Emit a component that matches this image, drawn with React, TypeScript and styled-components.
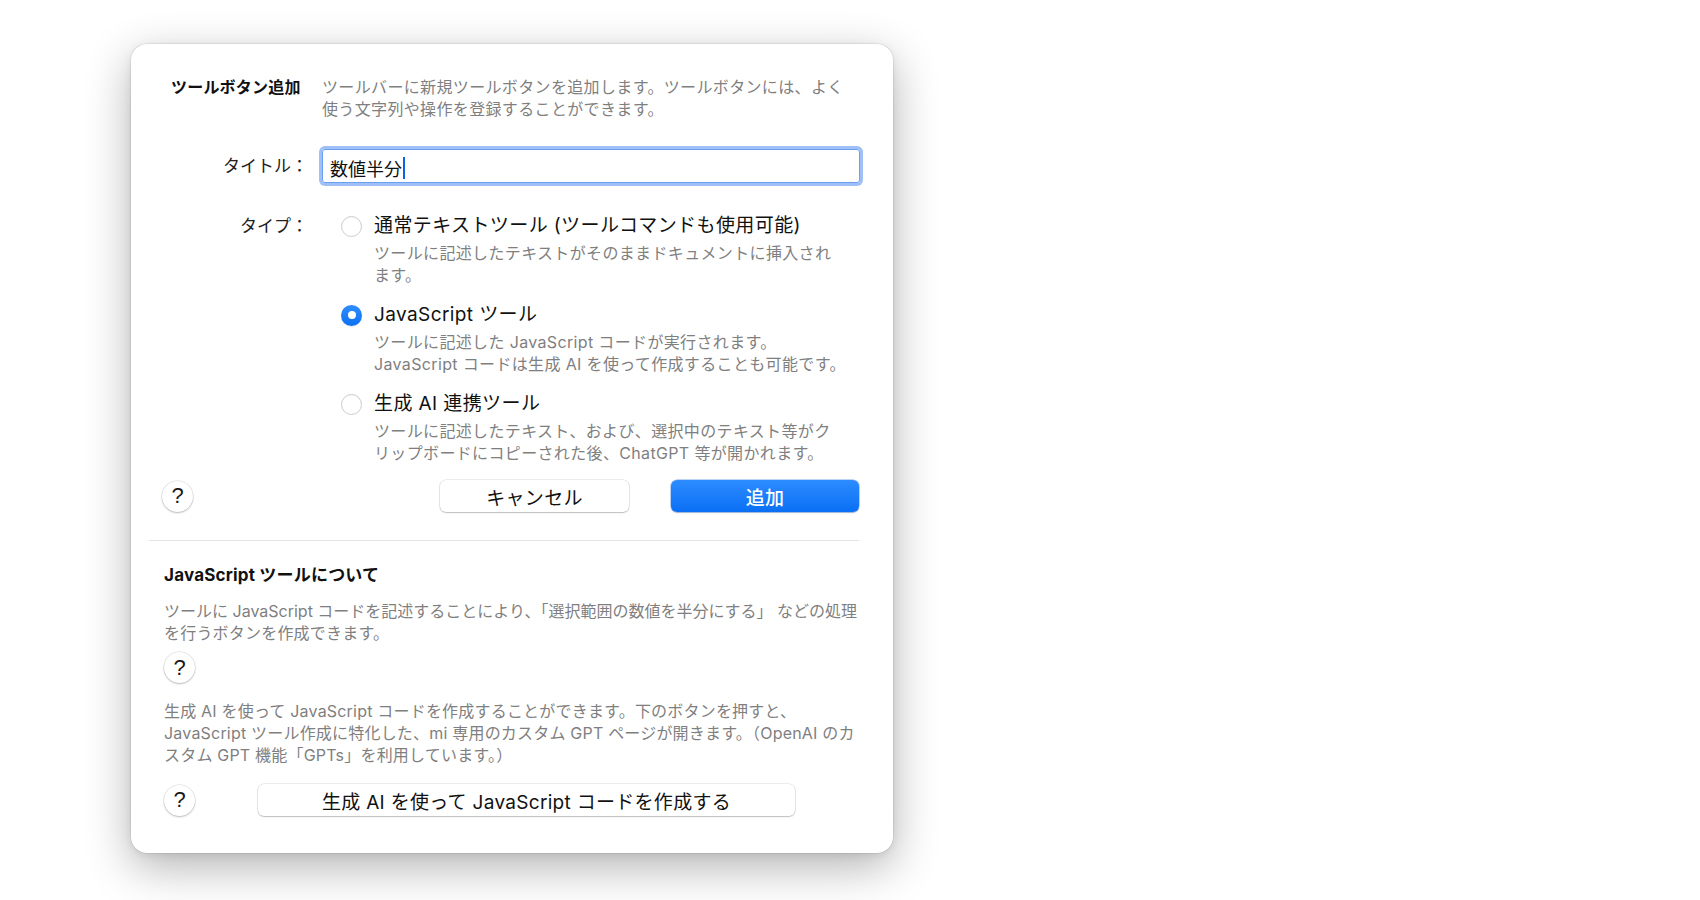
import React from 'react'
import styled, { createGlobalStyle } from 'styled-components'

const GlobalStyle = createGlobalStyle`
  html, body {
    margin: 0;
    padding: 0;
    background: #ffffff;
  }
  body {
    font-family: Inter, "Noto Sans CJK JP", sans-serif;
    color: #1d1d1f;
    -webkit-font-smoothing: antialiased;
  }
`

const Page = styled.div`
  width: 1700px;
  height: 900px;
  padding: 44px 0 0 131px;
  box-sizing: border-box;
`

const Dialog = styled.div`
  width: 762px;
  height: 809px;
  box-sizing: border-box;
  background: #ffffff;
  border-radius: 16px;
  box-shadow: 0 0 0 0.5px rgba(0, 0, 0, 0.12), 0 14px 46px rgba(0, 0, 0, 0.3), 0 2px 8px rgba(0, 0, 0, 0.08);
  display: flex;
  flex-direction: column;
`

const FormGrid = styled.div`
  display: grid;
  grid-template-columns: 139px 1fr;
  column-gap: 12px;
  padding: 32px 33px 0 40px;
  align-items: start;
`

const Heading = styled.div<{ $size?: number }>`
  font-size: ${(p) => p.$size ?? 16}px;
  font-weight: 700;
  line-height: 22px;
  letter-spacing: 0.2px;
  color: #111;
`

const Label = styled.div<{ $top?: number }>`
  font-size: 17px;
  line-height: 26px;
  text-align: right;
  color: #222;
  padding-right: 2px;
  margin-top: ${(p) => p.$top ?? 0}px;
`

const Note = styled.div<{ $spacing?: number }>`
  font-size: 16px;
  line-height: 22px;
  letter-spacing: ${(p) => p.$spacing ?? 0.35}px;
  color: #7f7f7f;
  white-space: nowrap;
`

const TextField = styled.div`
  margin-top: 29px;
  height: 34px;
  box-sizing: border-box;
  border: 1px solid #6c9ff0;
  border-radius: 3px;
  box-shadow: 0 0 0 3px #9fc0f7;
  display: flex;
  align-items: center;
  padding: 3px 0 0 7px;
  font-size: 18px;
  color: #111;
`

const Caret = styled.span`
  display: inline-block;
  width: 2px;
  height: 22px;
  margin-left: 1px;
  background: #0b63e5;
`

const Options = styled.div`
  margin-top: 30px;
  padding-left: 19px;
  display: flex;
  flex-direction: column;
  gap: 16px;
`

const Option = styled.div`
  display: grid;
  grid-template-columns: 21px 1fr;
  column-gap: 12px;
  align-items: center;
`

const Radio = styled.span<{ $checked?: boolean }>`
  width: 21px;
  height: 21px;
  box-sizing: border-box;
  border-radius: 50%;
  display: flex;
  align-items: center;
  justify-content: center;
  background: ${(p) => (p.$checked ? 'linear-gradient(#2f8cff, #0b72f2)' : '#fff')};
  border: ${(p) => (p.$checked ? 'none' : '1px solid #cdcdcd')};
  box-shadow: ${(p) => (p.$checked ? '0 0.5px 1px rgba(0,0,0,0.2)' : 'inset 0 0.5px 1px rgba(0,0,0,0.06)')};

  &::after {
    content: '';
    display: ${(p) => (p.$checked ? 'block' : 'none')};
    width: 8px;
    height: 8px;
    border-radius: 50%;
    background: #fff;
  }
`

const OptionLabel = styled.div`
  font-size: 19px;
  line-height: 26px;
  letter-spacing: 0.4px;
  color: #111;
  white-space: nowrap;
`

const OptionNote = styled.div`
  grid-column: 2;
  margin-top: 3px;
  font-size: 16px;
  line-height: 22px;
  letter-spacing: 0.35px;
  color: #7f7f7f;
  white-space: nowrap;
`

const ButtonRow = styled.div`
  display: flex;
  align-items: center;
  padding: 16px 34px 0 31px;
`

const HelpButton = styled.button`
  width: 31px;
  height: 31px;
  flex: none;
  border: none;
  border-radius: 50%;
  background: #fff;
  box-shadow: 0 0 0 0.5px rgba(0, 0, 0, 0.14), 0 1px 2px rgba(0, 0, 0, 0.22);
  font-family: "Liberation Sans", "Noto Sans CJK JP", sans-serif;
  font-size: 22px;
  line-height: 1;
  color: #1a1a1a;
  padding: 0;
  display: flex;
  align-items: center;
  justify-content: center;
`

const PushButton = styled.button<{ $primary?: boolean; $width: number }>`
  width: ${(p) => p.$width}px;
  height: 32px;
  border: none;
  border-radius: 6px;
  padding: 0;
  font-family: Inter, "Noto Sans CJK JP", sans-serif;
  font-size: 19px;
  font-weight: ${(p) => (p.$primary ? 500 : 400)};
  letter-spacing: 0.3px;
  color: ${(p) => (p.$primary ? '#fff' : '#111')};
  background: ${(p) => (p.$primary ? 'linear-gradient(#2d8cff, #0a6ff4)' : '#fff')};
  box-shadow: ${(p) =>
    p.$primary
      ? '0 0 0 0.5px rgba(0, 90, 220, 0.5), 0 1px 1.5px rgba(0, 0, 0, 0.18)'
      : '0 0 0 0.5px rgba(0, 0, 0, 0.14), 0 1px 1.5px rgba(0, 0, 0, 0.2)'};
`

const Spacer = styled.div`
  flex: 1;
`

const Separator = styled.hr`
  margin: 28px 34px 0 18px;
  border: none;
  border-top: 1.5px solid #e3e3e3;
`

const About = styled.div`
  padding: 23px 34px 0 33px;
  display: flex;
  flex-direction: column;
  align-items: flex-start;
`

const AboutTitle = styled(Heading)`
  margin-bottom: 14px;
`

const AboutRow = styled.div`
  display: flex;
  align-items: center;
  gap: 63px;
  margin-top: 18px;
`

export default function App() {
  return (
    <>
      <GlobalStyle />
      <Page>
        <Dialog>
          <FormGrid>
            <Heading>ツールボタン追加</Heading>
            <div>
              <Note>ツールバーに新規ツールボタンを追加します。ツールボタンには、よく</Note>
              <Note>使う文字列や操作を登録することができます。</Note>
            </div>

            <Label $top={33}>タイトル：</Label>
            <TextField>
              数値半分
              <Caret />
            </TextField>

            <Label $top={30}>タイプ：</Label>
            <Options>
              <Option>
                <Radio />
                <OptionLabel>通常テキストツール (ツールコマンドも使用可能)</OptionLabel>
                <OptionNote>
                  ツールに記述したテキストがそのままドキュメントに挿入され
                  <br />
                  ます。
                </OptionNote>
              </Option>
              <Option>
                <Radio $checked />
                <OptionLabel>JavaScript ツール</OptionLabel>
                <OptionNote>
                  ツールに記述した JavaScript コードが実行されます。
                  <br />
                  JavaScript コードは生成 AI を使って作成することも可能です。
                </OptionNote>
              </Option>
              <Option>
                <Radio />
                <OptionLabel>生成 AI 連携ツール</OptionLabel>
                <OptionNote>
                  ツールに記述したテキスト、および、選択中のテキスト等がク
                  <br />
                  リップボードにコピーされた後、ChatGPT 等が開かれます。
                </OptionNote>
              </Option>
            </Options>
          </FormGrid>

          <ButtonRow>
            <HelpButton>?</HelpButton>
            <Spacer />
            <PushButton $width={189}>キャンセル</PushButton>
            <PushButton $primary $width={188} style={{ marginLeft: 42 }}>
              追加
            </PushButton>
          </ButtonRow>

          <Separator />

          <About>
            <AboutTitle $size={17}>JavaScript ツールについて</AboutTitle>
            <Note $spacing={0}>ツールに JavaScript コードを記述することにより、「選択範囲の数値を半分にする」 などの処理</Note>
            <Note $spacing={0.2}>を行うボタンを作成できます。</Note>
            <HelpButton style={{ marginTop: 8, marginBottom: 17 }}>?</HelpButton>
            <Note $spacing={0.2}>生成 AI を使って JavaScript コードを作成することができます。下のボタンを押すと、</Note>
            <Note $spacing={0.2}>JavaScript ツール作成に特化した、mi 専用のカスタム GPT ページが開きます。（OpenAI のカ</Note>
            <Note $spacing={0.2}>スタム GPT 機能「GPTs」を利用しています。）</Note>
            <AboutRow>
              <HelpButton>?</HelpButton>
              <PushButton $width={537}>生成 AI を使って JavaScript コードを作成する</PushButton>
            </AboutRow>
          </About>
        </Dialog>
      </Page>
    </>
  )
}
